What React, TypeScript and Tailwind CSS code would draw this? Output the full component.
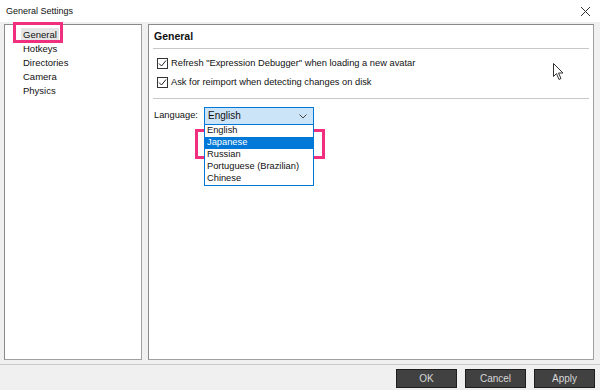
const languages = ["English", "Japanese", "Russian", "Portuguese (Brazilian)", "Chinese"];
const treeItems = ["General", "Hotkeys", "Directories", "Camera", "Physics"];

const Check = ({ label }: { label: string }) => (
  <div className="flex items-center h-[19px]">
    <span className="w-[11px] h-[11px] border border-[#333] bg-white flex items-center justify-center mr-[3px]">
      <svg width="9" height="9" viewBox="0 0 9 9">
        <path d="M1 4.5 L3.5 7 L8 1.5" fill="none" stroke="#222" strokeWidth="1" />
      </svg>
    </span>
    <span className="whitespace-nowrap">{label}</span>
  </div>
);

export default function App() {
  return (
    <div className="w-[600px] h-[390px] bg-[#f0f0f0] flex flex-col relative overflow-hidden text-[9.3px] text-[#111] font-['Liberation_Sans',sans-serif] leading-none">
      {/* TITLE BAR */}
      <div className="h-[22px] bg-white flex items-center justify-between pl-[6px] pr-[9px]">
        <span className="text-[9px] whitespace-nowrap">General Settings</span>
        <svg width="11" height="11" viewBox="0 0 11 11">
          <path d="M1 1 L10 10 M10 1 L1 10" stroke="#333" strokeWidth="1" />
        </svg>
      </div>

      {/* PANELS */}
      <div className="flex mt-[2px] ml-[4px] gap-[6px] h-[336px]">
        <div className="w-[138px] h-full bg-white border border-[#a0a0a0] border-t-[#8a8a8a] border-l-[#8a8a8a] pt-[3px] pl-[18px] text-[9.5px]">
          {treeItems.map((t, i) => (
            <div key={t} className="h-[14px] flex items-center">
              <span className={i === 0 ? "bg-[#e5e5e5] px-[2px] -ml-[2px] py-[2px]" : ""}>{t}</span>
            </div>
          ))}
        </div>

        <div className="w-[446px] h-full bg-white border border-[#a0a0a0] border-t-[#8a8a8a] border-l-[#8a8a8a] px-[4px] relative">
          <div className="h-[23px] flex items-center pl-[1px] font-bold text-[10.5px]">General</div>
          <div className="border-t border-[#c8c8c8]" />
          <div className="pt-[5px] pl-[4px] pb-[6px]">
            <Check label={'Refresh "Expression Debugger" when loading a new avatar'} />
            <Check label="Ask for reimport when detecting changes on disk" />
          </div>
          <div className="border-t border-[#c8c8c8]" />
          <div className="flex items-center mt-[8px] pl-[1px]">
            <span className="w-[50px]">Language:</span>
            <div className="relative">
              <div className="w-[110px] h-[18px] bg-[#cce4f7] border border-[#0078d7] flex items-center justify-between pl-[3px] pr-[6px] text-[10px]">
                <span>English</span>
                <svg width="8" height="5" viewBox="0 0 8 5">
                  <path d="M0.5 0.5 L4 4 L7.5 0.5" fill="none" stroke="#444" strokeWidth="1" />
                </svg>
              </div>
              <div className="absolute left-0 top-[17px] w-[110px] bg-white border border-[#0078d7] z-10">
                {languages.map((l, i) => (
                  <div
                    key={l}
                    className={
                      "h-[12px] flex items-center pl-[2px] whitespace-nowrap " +
                      (i === 1 ? "bg-[#0078d7] text-white" : "")
                    }
                  >
                    {l}
                  </div>
                ))}
              </div>
            </div>
          </div>

          {/* MOUSE CURSOR */}
          <svg className="absolute left-[404px] top-[38px]" width="12" height="18" viewBox="0 0 12 18">
            <path d="M0.5 0.5 L0.5 13.5 L3.5 10.5 L6 16.5 L8 15.5 L5.5 10 L10 10 Z" fill="#fff" stroke="#333" strokeWidth="1" />
          </svg>
        </div>
      </div>

      {/* FOOTER */}
      <div className="mt-[4px] border-t border-[#c8c8c8] flex justify-end gap-[8px] pr-[5px] pt-[4px]">
        {["OK", "Cancel", "Apply"].map((b) => (
          <button
            key={b}
            className="w-[61px] h-[19px] bg-[#414141] border border-[#1e1e1e] text-[#d8d8d8] text-[10px]"
          >
            {b}
          </button>
        ))}
      </div>

      {/* PINK HIGHLIGHTS */}
      <div className="absolute left-[13px] top-[22px] w-[50px] h-[21px] border-[3px] border-[#f0307f]" />
      <div className="absolute left-[195px] top-[129px] w-[130px] h-[30px] border-[3px] border-[#f0307f]" />
    </div>
  );
}
